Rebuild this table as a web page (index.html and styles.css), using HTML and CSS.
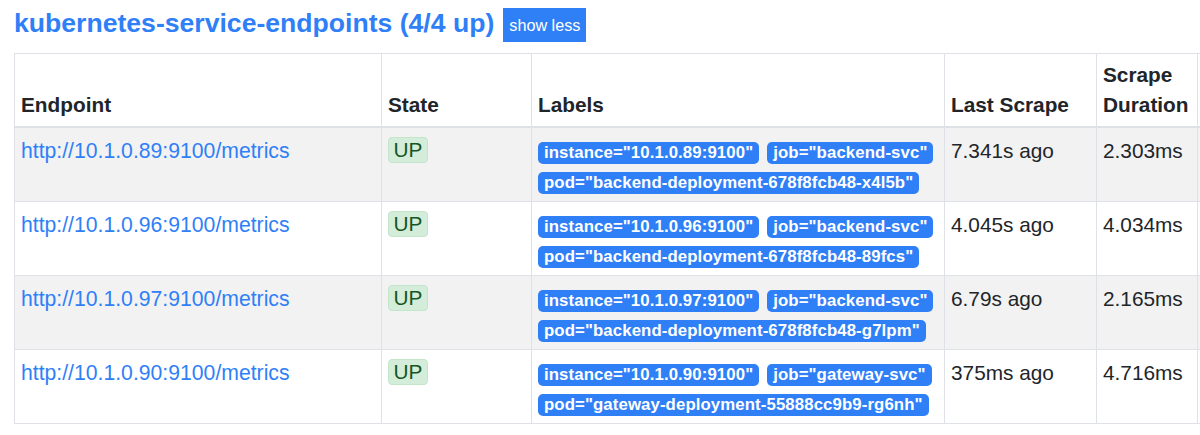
FILE: index.html
```html
<!DOCTYPE html>
<html lang="en">
<head>
<meta charset="utf-8">
<title>Targets</title>
<link rel="stylesheet" href="styles.css">
</head>
<body>
<div class="page">
  <div class="job-head">
    <a class="job-title" href="#job-kubernetes-service-endpoints">kubernetes-service-endpoints (4/4 up)</a>
    <button class="btn-toggle" type="button">show less</button>
  </div>
  <div class="table-wrap">
    <table class="targets">
      <colgroup>
        <col class="c-endpoint">
        <col class="c-state">
        <col class="c-labels">
        <col class="c-last">
        <col class="c-dur">
        <col class="c-err">
      </colgroup>
      <thead>
        <tr>
          <th>Endpoint</th>
          <th>State</th>
          <th>Labels</th>
          <th>Last Scrape</th>
          <th>Scrape Duration</th>
          <th></th>
        </tr>
      </thead>
      <tbody>
        <tr>
          <td><a class="ep" href="#">http://10.1.0.89:9100/metrics</a></td>
          <td><span class="state">UP</span></td>
          <td>
            <div class="labels">
              <span class="lbl">instance="10.1.0.89:9100"</span>
              <span class="lbl">job="backend-svc"</span>
              <span class="lbl">pod="backend-deployment-678f8fcb48-x4l5b"</span>
            </div>
          </td>
          <td>7.341s ago</td>
          <td>2.303ms</td>
          <td></td>
        </tr>
        <tr>
          <td><a class="ep" href="#">http://10.1.0.96:9100/metrics</a></td>
          <td><span class="state">UP</span></td>
          <td>
            <div class="labels">
              <span class="lbl">instance="10.1.0.96:9100"</span>
              <span class="lbl">job="backend-svc"</span>
              <span class="lbl">pod="backend-deployment-678f8fcb48-89fcs"</span>
            </div>
          </td>
          <td>4.045s ago</td>
          <td>4.034ms</td>
          <td></td>
        </tr>
        <tr>
          <td><a class="ep" href="#">http://10.1.0.97:9100/metrics</a></td>
          <td><span class="state">UP</span></td>
          <td>
            <div class="labels">
              <span class="lbl">instance="10.1.0.97:9100"</span>
              <span class="lbl">job="backend-svc"</span>
              <span class="lbl">pod="backend-deployment-678f8fcb48-g7lpm"</span>
            </div>
          </td>
          <td>6.79s ago</td>
          <td>2.165ms</td>
          <td></td>
        </tr>
        <tr>
          <td><a class="ep" href="#">http://10.1.0.90:9100/metrics</a></td>
          <td><span class="state">UP</span></td>
          <td>
            <div class="labels">
              <span class="lbl">instance="10.1.0.90:9100"</span>
              <span class="lbl">job="gateway-svc"</span>
              <span class="lbl">pod="gateway-deployment-55888cc9b9-rg6nh"</span>
            </div>
          </td>
          <td>375ms ago</td>
          <td>4.716ms</td>
          <td></td>
        </tr>
      </tbody>
    </table>
  </div>
</div>
</body>
</html>
```
FILE: styles.css
```css
html, body {
  margin: 0;
  padding: 0;
  overflow: hidden;
  background: #fff;
}

body {
  font-family: "Liberation Sans", Arial, Helvetica, sans-serif;
  color: #212529;
}

.page {
  padding: 8px 0 0 14px;
}

.job-head {
  display: flex;
  align-items: flex-start;
  gap: 9px;
  height: 34px;
  margin-bottom: 11px;
}

.job-title {
  font-size: 26.6px;
  font-weight: 700;
  line-height: 31px;
  color: #2f7ff7;
  text-decoration: none;
  white-space: nowrap;
}

.btn-toggle {
  font-family: "Liberation Sans", Arial, sans-serif;
  font-size: 16.2px;
  line-height: 24px;
  height: 34px;
  padding: 5px 6px;
  border: 0;
  border-radius: 0;
  background: #2f7ff7;
  color: #fff;
  cursor: pointer;
}

.table-wrap {
  width: 100%;
  overflow: hidden;
}

.targets {
  border-collapse: collapse;
  table-layout: fixed;
  width: 1283px;
  font-size: 20.8px;
  line-height: 30px;
}

.c-endpoint { width: 367px; }
.c-state { width: 150px; }
.c-labels { width: 413px; }
.c-last { width: 152px; }
.c-dur { width: 101px; }
.c-err { width: 100px; }

.targets th,
.targets td {
  border: 1px solid #dee2e6;
  padding: 6px;
  text-align: left;
}

.targets th {
  vertical-align: bottom;
  font-weight: 700;
  border-bottom-width: 2px;
}

.targets td {
  vertical-align: top;
  padding-top: 8px;
  padding-bottom: 4px;
}

.targets tbody tr:nth-child(odd) {
  background: #f2f2f2;
}

.ep {
  font-size: 21.2px;
  color: #2f7ff7;
  text-decoration: none;
}

.state {
  display: inline-block;
  vertical-align: top;
  margin-top: 1px;
  font-size: 20.8px;
  line-height: 20px;
  padding: 2px 4.5px;
  border: 1px solid #c3e6cb;
  border-radius: 4px;
  background: #d4edda;
  color: #155724;
}

.labels {
  display: flex;
  flex-wrap: wrap;
  gap: 8px;
  padding: 6px 0 3px;
}

.lbl {
  display: inline-block;
  font-size: 16.8px;
  font-weight: 700;
  letter-spacing: 0.1px;
  line-height: 16px;
  padding: 3px 6px;
  border-radius: 5px;
  background: #2f7ff7;
  color: #fff;
  white-space: nowrap;
}
```
